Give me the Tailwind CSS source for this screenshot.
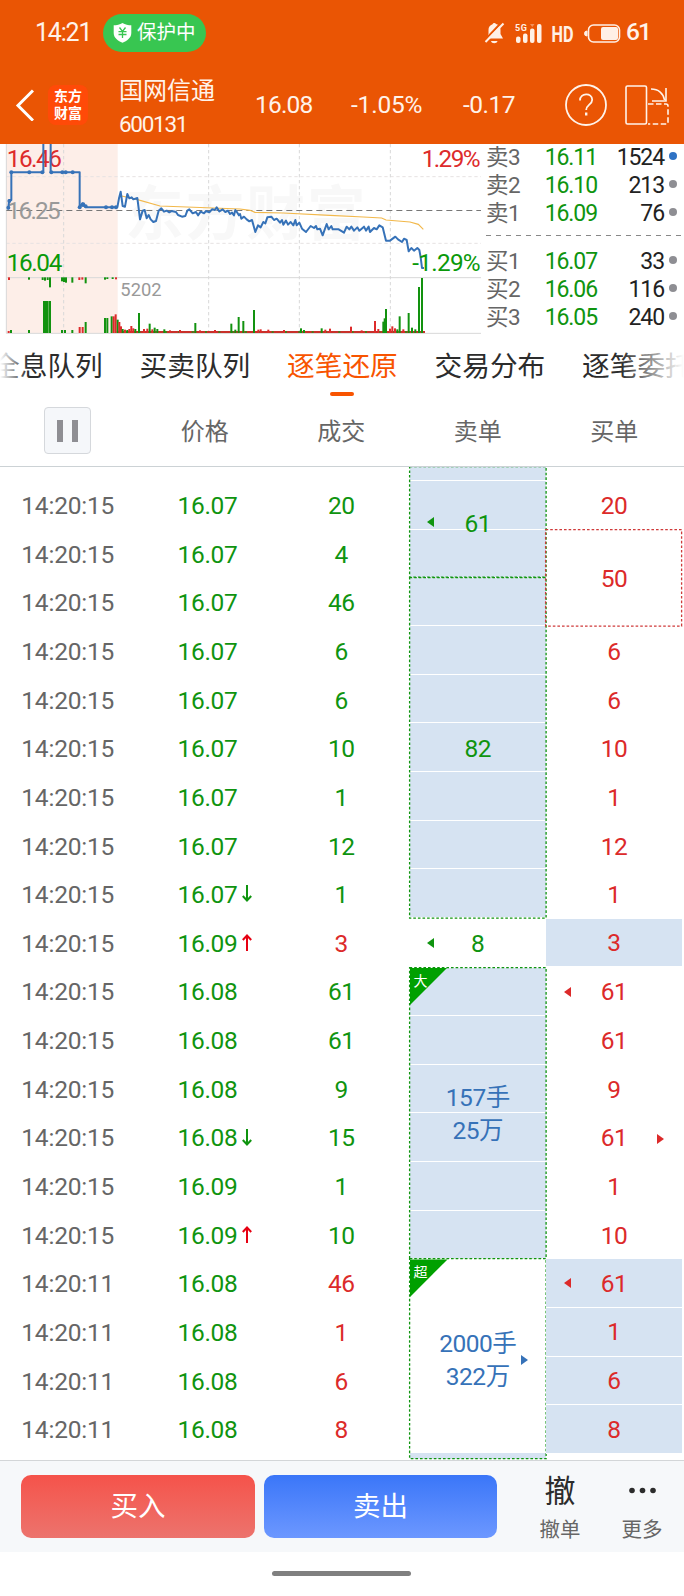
<!DOCTYPE html>
<html lang="zh-CN">
<head>
  <meta charset="UTF-8">
  <meta name="viewport" content="width=device-width, initial-scale=1.0">
  <title>国网信通 600131</title>
  <script src="https://cdn.jsdelivr.net/npm/@tailwindcss/browser@4"></script>
</head>
<body class="bg-white font-['Roboto','Noto_Sans_CJK_SC',sans-serif] text-2xl leading-none">
  <div class="w-[684px] h-[1596px] overflow-hidden flex flex-col">

    <!-- Cabecera -->
    <header class="h-36 shrink-0 bg-[#ea5504] text-[#fff3ea]">
      <div class="h-16 flex items-center pl-[35px] pr-[35px] pt-px">
        <span class="w-[68px] text-[25px] tracking-[-1.200px]">14:21</span>
        <div class="w-[103px] h-[38px] rounded-full bg-[#38c651] flex items-center pl-[10px] gap-[5px] text-white">
          <svg class="w-[19px] h-5" viewBox="0 0 19 20"><path d="M9.5 0C7 1.6 3.500 2.300.7 2.300V10c0 5 4.500 8 8.800 9.700 4.300-1.700 8.800-4.700 8.800-9.700V2.300C15.500 2.300 12 1.600 9.500 0z" fill="#fff"/><path d="M6.500 4.500l3 4 3-4M5.500 8.700h8M5.500 11.500h8M9.500 8.500v6.500" stroke="#38c651" stroke-width="1.300" fill="none"/></svg>
          <span class="text-[19.500px] leading-6 pt-px">保护中</span>
        </div>
        <svg class="w-[142px] h-7 ml-auto" viewBox="0 0 142 28">
          <g fill="#fff0e6">
            <path d="M6 19.500L7.500 15V11a6 6 0 0 1 4-5.800A2 2 0 0 1 15 5a6 6 0 0 1 4.500 6v4l2.500 4.500zM10 22h6.500c-.5 3-6 3-6.500 0z"/>
            <path d="M3.500 21.500L20.500 3.500" stroke="#ea5504" stroke-width="2.200"/>
            <path d="M4.500 23L22.500 4.500" stroke="#fff0e6" stroke-width="2"/>
            <rect x="35" y="17.500" width="4.500" height="6.500" rx="2"/>
            <rect x="42" y="14.500" width="4.500" height="9.500" rx="2"/>
            <rect x="49" y="9.500" width="4.500" height="14.500" rx="2"/>
            <rect x="56" y="5" width="4.500" height="19" rx="2"/>
            <path d="M49 5h4.500l-2.200 3z" opacity=".4"/>
            <text x="34" y="11.500" font-size="9" font-weight="700" textLength="12">5G</text>
            <text x="70.500" y="23" font-size="22.500" font-weight="700" textLength="22" lengthAdjust="spacingAndGlyphs">HD</text>
            <rect x="120" y="8" width="17" height="13" rx="2"/>
            <path d="M106 12v5a2.500 2.500 0 0 1 0-5z" stroke="#fff0e6"/>
          </g>
          <rect x="107.500" y="6" width="31" height="17" rx="5" fill="none" stroke="#fff0e6" stroke-width="1.600"/>
        </svg>
        <span class="ml-[3px] text-[24.500px] tracking-[-1.800px] w-[23px] font-medium">61</span>
      </div>
      <div class="h-20 flex items-center pt-px">
        <svg class="w-[19px] h-8 ml-[15px]" viewBox="0 0 19 32" fill="none" stroke="#fff" stroke-width="3"><path d="M18 1.500L3 16.500l15 15"/></svg>
        <div class="w-10 h-10 ml-[14px] rounded-lg bg-[#ff4a08] text-white text-[14px] leading-[17px] font-bold text-center pt-[3px]">东方<br>财富</div>
        <div class="w-[136px] ml-[31px]">
          <div class="leading-[34px] pt-[4px]">国网信通</div>
          <div class="text-[22.500px] leading-[32px] tracking-[-1.300px]">600131</div>
        </div>
        <span class="w-24 pt-px text-[24.500px] tracking-[-0.800px]">16.08</span>
        <span class="w-[112px] pt-px text-[24.500px] tracking-[-0.200px]">-1.05%</span>
        <span class="w-[102px] pt-px text-[24.500px] tracking-[-0.500px]">-0.17</span>
        <svg class="w-[42px] h-[42px]" viewBox="0 0 42 42" fill="none" stroke="#fff3ea" stroke-width="1.800"><circle cx="21" cy="21" r="20"/><path d="M15 16.500c0-8 12.200-8 12.200-.8 0 5-6 5-6 10.300"/><path d="M21.200 28.500v3" stroke-width="2.400"/></svg>
        <svg class="w-11 h-10 ml-[18px]" viewBox="0 0 44 40" fill="none" stroke="#fff3ea" stroke-width="1.600">
          <rect x="1" y="1" width="20.500" height="38" rx="1.500"/>
          <path d="M23 19h18a2 2 0 0 1 2 2v17a1 1 0 0 1-1 1H23" stroke-dasharray="5.500 2.500"/>
          <path d="M26 4c7.500 0 12.500 4.500 13.500 11M41 3v13H27"/>
        </svg>
      </div>
    </header>

    <!-- Gráfico intradía y cinco niveles -->
    <section class="h-48 shrink-0 flex">
      <svg class="w-[481px] h-48 shrink-0" viewBox="0 12 1443 576">
        <rect x="19" y="12" width="334" height="567" fill="#fdeee8"/>
        <text x="375" y="285" font-size="176" font-weight="700" fill="#f8f8f8" textLength="722">东方财富</text>
        <g stroke="#d8d8d8" stroke-width="3" fill="none">
          <path d="M19 110H1443M19 310H1443" stroke="#e6e2e2" stroke-dasharray="10 8"/>
          <path d="M191 12V579M626 12V579M898 12V579M1171 12V579" stroke-dasharray="10 8"/>
          <path d="M19 12V580H1443M19 413H1443"/>
        </g>
        <path d="M19 211.500H1443" stroke="#777" stroke-width="3" stroke-dasharray="18 12"/>
        <polyline points="365,168 410,178 480,198 720,207 750,211 765,217 850,219 990,226 1090,231 1145,234 1158,240 1230,246 1255,253 1270,268" fill="none" stroke="#f2b84b" stroke-width="3.500"/>
        <text x="20" y="81" font-size="73" fill="#dd2b2b" textLength="166">16.46</text>
        <text x="20" y="237" font-size="73" fill="#999" textLength="162">16.25</text>
        <text x="20" y="393" font-size="73" fill="#0a990a" textLength="167">16.04</text>
        <g fill="none" stroke="#3672b8" stroke-width="6" stroke-linejoin="round">
          <polyline points="24,208 28,180 34,180 34,97 130,97 130,0 152,0 152,97 239,97 239,202 248,190 258,202 352,202 357,175 362,155 368,198 375,200 382,162 388,175 395,172 400,178 412,174 416,205 420,238 428,212 434,210 440,235 446,225 452,238 460,246 468,243 476,212 484,205 492,215 500,212 508,217 515,213 528,216 534,225 546,230 556,228 562,212 568,208 578,220 588,216 594,226 602,215 612,220 618,213 628,217 636,208 645,210 650,202 658,214 668,208 676,216 684,212 690,222 696,218 702,226 706,210 712,218 718,228"/>
          <polyline transform="translate(690 0)" points="28,228 30,222 34,236 42,230 50,238 58,244 66,240 76,276 84,256 92,262 100,246 106,250 112,232 124,230 132,240 140,236 150,248 156,240 160,254 168,242 174,254 182,246 190,256 196,240 200,256 208,248 216,266 228,276 242,258 252,264 258,258 262,268 270,266 278,286 290,252 296,268 304,258 308,268 326,268 342,278 350,260 358,268 364,260 372,272 382,262 388,272 402,260 408,272 416,260 420,276 432,264 440,268 448,256 458,262 468,302 480,302 496,290 504,298 516,306 522,296 530,300 536,334 544,324 552,332 562,324 568,330 572,352 576,384 582,384"/>
        </g>
        <g fill="#3672b8">
          <circle cx="28" cy="183" r="6"/><circle cx="25" cy="203" r="6"/><circle cx="34" cy="97" r="6"/><circle cx="88" cy="97" r="6"/><circle cx="127" cy="97" r="6"/><circle cx="154" cy="97" r="6"/>
          <circle cx="187" cy="97" r="6"/><circle cx="197" cy="97" r="6"/><circle cx="218" cy="97" r="6"/><circle cx="239" cy="202" r="6"/><circle cx="249" cy="194" r="7"/>
          <circle cx="257" cy="199" r="6"/><circle cx="318" cy="202" r="6"/><circle cx="336" cy="202" r="6"/><circle cx="348" cy="202" r="6"/>
        </g>
        <text x="1265" y="81" font-size="73" fill="#dd2b2b" textLength="177">1.29%</text>
        <text x="1237" y="393" font-size="73" fill="#0a990a" textLength="205">-1.29%</text>
        <text x="361" y="468" font-size="55" fill="#999" textLength="124">5202</text>
        <!-- volumen -->
        <g id="volume"></g>
      </svg>
      <div class="flex-1 pl-[5px] pr-[7px] text-[23px]">
        <div id="asks" class="-mt-px"></div>
        <svg class="w-[196px] h-[20px] block" viewBox="0 0 196 20"><path d="M0 8.500H196" stroke="#888" stroke-dasharray="5 5"/></svg>
        <div id="bids"></div>
      </div>
    </section>

    <!-- Pestañas -->
    <nav class="relative h-[62px] shrink-0 overflow-hidden text-[27.700px] text-[#2c2c2c]">
      <div class="flex gap-[36.500px] -ml-[8px] pt-[11px] leading-[40px] whitespace-nowrap">
        <span class="w-[111px] shrink-0">全息队列</span>
        <span class="w-[111px] shrink-0">买卖队列</span>
        <span class="w-[111px] shrink-0 text-[#f85400]">逐笔还原</span>
        <span class="w-[111px] shrink-0">交易分布</span>
        <span class="w-[111px] shrink-0">逐笔委托</span>
      </div>
      <div class="mx-auto mt-[5px] w-6 h-1 rounded-full bg-[#f85400]"></div>
      <div class="absolute left-0 top-0 w-7 h-14 bg-linear-to-r from-white to-white/0"></div>
      <div class="absolute right-0 top-0 w-16 h-14 bg-linear-to-l from-white to-white/0"></div>
    </nav>

    <!-- Encabezado de la tabla -->
    <div class="h-[69px] shrink-0 grid grid-cols-[repeat(5,136.500px)] items-center text-center text-[#666] border-b border-[#ccd2d5] pb-[3px]">
      <div class="w-[47px] h-[47px] ml-[44px] rounded border border-[#d5d8dc] bg-[#f5f7fa] flex items-center justify-center gap-[9px]">
        <i class="w-[6px] h-[22px] bg-[#8e8e93]"></i>
        <i class="w-[6px] h-[22px] bg-[#8e8e93]"></i>
      </div>
      <span class="pt-[3px]">价格</span>
      <span class="pt-[3px]">成交</span>
      <span class="pt-[3px]">卖单</span>
      <span class="pt-[3px]">买单</span>
    </div>

    <!-- Lista -->
    <main class="h-[993px] shrink-0 overflow-hidden flex text-[24.500px] tracking-[-0.500px]">
      <div id="ticks" class="w-[409.500px] pt-[14px]"></div>
      <div id="sells" class="w-[136.500px]"></div>
      <div id="buys" class="w-[136px] pt-[14px]"></div>
    </main>

    <!-- Barra inferior -->
    <footer class="h-[92px] shrink-0 bg-[#f6f8fa] border-t border-[#d3d6d8] flex items-start pt-[14px] pl-[21px]">
      <button class="w-[234px] h-[63px] rounded-[10px] bg-linear-to-b from-[#f5524a] to-[#ec736d] text-white text-[27.500px] pt-px">买入</button>
      <button class="w-[233px] h-[63px] ml-[9px] rounded-[10px] bg-linear-to-b from-[#3a76f8] to-[#6c97ff] text-white text-[27.500px] pt-px">卖出</button>
      <div class="w-[82px] ml-[22px] text-center text-[#2c2c2c]">
        <div class="text-[31px] leading-[32px] pt-px">撤</div>
        <div class="text-[20.500px] leading-[24px] mt-[10px] text-[#666]">撤单</div>
      </div>
      <div class="w-[82px] text-center">
        <svg class="w-7 h-8 mx-auto" viewBox="0 0 28 32" fill="#2c2c2c"><circle cx="4" cy="15.500" r="2.800"/><circle cx="14.500" cy="15.500" r="2.800"/><circle cx="25" cy="15.500" r="2.800"/></svg>
        <div class="text-[20.500px] leading-[24px] mt-[11px] text-[#666]">更多</div>
      </div>
    </footer>
    <div class="flex-1 pt-[19px]"><div class="w-[139px] h-[5px] ml-[272px] rounded-full bg-[#808080]"></div></div>
  </div>

  <script>
    const GREEN = 'text-[#0f940f]';
    const RED = 'text-[#dc2a2a]';

    // Barras de volumen: [x, alto, color]
    const bars = [
      [26,6,'r'],[33,9,'g'],[87,9,'g'],[132,96,'g'],[138,96,'g'],[143,96,'g'],[150,96,'g'],[186,9,'g'],[195,9,'g'],[217,9,'g'],
      [239,18,'r'],[248,18,'r'],[257,33,'g'],[315,45,'g'],[322,45,'g'],[335,50,'g'],[341,50,'r'],[347,56,'r'],[353,40,'g'],[358,33,'r'],[363,20,'r'],[368,12,'g'],[375,10,'r'],
      [382,9,'g'],[388,12,'r'],[394,21,'r'],[400,14,'r'],[406,12,'g'],[417,60,'g'],[432,12,'r'],[442,13,'r'],[449,28,'g'],[457,11,'r'],[464,16,'g'],[472,12,'g'],
      [493,11,'g'],[510,8,'r'],[540,9,'r'],[586,30,'g'],[600,8,'r'],[645,9,'r'],[694,28,'g'],[706,10,'g'],[716,48,'g'],[730,36,'g'],
      [762,69,'g'],[775,10,'r'],[782,11,'r'],[805,10,'r'],[852,9,'r'],[903,14,'g'],[912,9,'g'],[965,14,'g'],[976,10,'r'],[990,13,'r'],
      [1053,19,'r'],[1085,8,'r'],[1125,36,'r'],[1135,12,'r'],[1150,34,'g'],[1154,44,'g'],[1158,72,'g'],[1170,13,'r'],[1177,20,'r'],[1185,14,'r'],
      [1192,11,'g'],[1199,50,'g'],[1210,11,'r'],[1226,60,'g'],[1236,16,'g'],[1246,11,'g'],[1257,138,'g'],[1266,165,'g']
    ];
    const upper = [[27,8,'r'],[87,7,'g'],[128,8,'g'],[135,10,'g'],[143,8,'g'],[150,30,'g'],[186,12,'g'],[192,14,'g'],[198,16,'g'],[217,16,'g'],[238,8,'r'],[247,7,'r'],[257,18,'g'],[315,7,'g'],[322,5,'g'],[338,5,'g'],[348,6,'r']];
    const fill = c => c === 'r' ? '#dd2b2b' : '#12920f';
    document.getElementById('volume').innerHTML =
      '<path d="M350 576H1275" stroke="#c8302a" stroke-width="6"/><path d="M375 576H1275" stroke="#4a7a18" stroke-width="6" stroke-dasharray="6 34"/>' +
      bars.map(([x, h, c]) => `<rect x="${x - 3}" y="${579 - h}" width="6" height="${h}" fill="${fill(c)}"/>`).join('') +
      upper.map(([x, h, c]) => `<rect x="${x - 3}" y="412" width="6" height="${h}" fill="${fill(c)}"/>`).join('');

    // Cinco niveles
    const level = ([name, price, qty, dot]) => `
      <div class="h-7 flex items-center">
        <span class="w-[37px] text-[#666] tracking-[-0.500px] text-[22.500px]">${name}</span>
        <span class="w-[74px] text-right tracking-[-1.100px] ${GREEN}">${price}</span>
        <span class="w-[67px] text-right tracking-[-1.100px] text-[#222]">${qty}</span>
        <i class="w-2 h-2 ml-[5px] -mt-[3px] rounded-full ${dot || 'bg-[#8e8e93]'}"></i>
      </div>`;
    document.getElementById('asks').innerHTML = [['卖3','16.11','1524','bg-[#2f72c4]'],['卖2','16.10','213'],['卖1','16.09','76']].map(level).join('');
    document.getElementById('bids').innerHTML = [['买1','16.07','33'],['买2','16.06','116'],['买3','16.05','240']].map(level).join('');

    // Operaciones: hora, precio, flecha, volumen, color
    const ticks = [
      ['14:20:15','16.07','','20',GREEN],['14:20:15','16.07','','4',GREEN],['14:20:15','16.07','','46',GREEN],['14:20:15','16.07','','6',GREEN],
      ['14:20:15','16.07','','6',GREEN],['14:20:15','16.07','','10',GREEN],['14:20:15','16.07','','1',GREEN],['14:20:15','16.07','','12',GREEN],
      ['14:20:15','16.07','down','1',GREEN],['14:20:15','16.09','up','3',RED],['14:20:15','16.08','','61',GREEN],['14:20:15','16.08','','61',GREEN],
      ['14:20:15','16.08','','9',GREEN],['14:20:15','16.08','down','15',GREEN],['14:20:15','16.09','','1',GREEN],['14:20:15','16.09','up','10',GREEN],
      ['14:20:11','16.08','','46',RED],['14:20:11','16.08','','1',RED],['14:20:11','16.08','','6',RED],['14:20:11','16.08','','8',RED]
    ];
    const arrows = {
      '': '',
      up: '<svg class="w-[10px] h-[18px] ml-[5px] -mt-[2px]" viewBox="0 0 10 18" fill="none" stroke="#e60012" stroke-width="2"><path d="M5 17V1.500M.8 6L5 1.500 9.200 6"/></svg>',
      down: '<svg class="w-[10px] h-[18px] ml-[5px] -mt-[2px]" viewBox="0 0 10 18" fill="none" stroke="#0f940f" stroke-width="2"><path d="M5 0v15.500M.8 11L5 15.500 9.200 11"/></svg>'
    };
    document.getElementById('ticks').innerHTML = ticks.map(([time, price, arrow, vol, color]) => `
      <div class="h-[48.650px] pt-[2px] grid grid-cols-3 items-center text-center">
        <span class="text-[#666] tracking-[-0.200px] pr-px">${time}</span>
        <span class="flex items-center pl-[41px] ${GREEN}"><b class="w-[59px] font-normal text-left tracking-[-0.300px]">${price}</b>${arrows[arrow]}</span>
        <span class="${color}">${vol}</span>
      </div>`).join('');

    const left = '<svg class="absolute left-[17.500px] top-1/2 -mt-[5px] w-[7px] h-[10px]" viewBox="0 0 7 10" fill="currentColor"><path d="M7 0v10L0 5z"/></svg>';
    const right = '<svg class="absolute right-[18px] top-1/2 -mt-[4px] w-[7px] h-[10px]" viewBox="0 0 7 10" fill="currentColor"><path d="M0 0v10l7-5z"/></svg>';
    const outline = color => `<svg class="absolute inset-0 w-full h-full overflow-visible" fill="none" stroke="${color}" stroke-width="1.300" stroke-dasharray="2.600 2"><rect x="-.4" y="-.4" width="100%" height="100%"/></svg>`;
    const cell = '<div class="h-[48.650px] bg-[#d6e3f2] border-b border-white"></div>';
    const tag = t => `<div class="absolute left-0 top-0 w-[38px] h-[38px] bg-[#00a000] [clip-path:polygon(0_0,100%_0,0_100%)] text-white text-sm leading-[26px] pl-[4px]">${t}</div>`;
    const label = (text, color) => `<div class="absolute inset-0 pt-[2px] flex items-center justify-center text-center leading-[33px] ${color}">${text}</div>`;

    // Órdenes de venta
    document.getElementById('sells').innerHTML = `
      <div class="relative h-[110.500px]">
        <div class="h-[14px] bg-[#d6e3f2] border-b border-white"></div>${cell}${cell}
        ${outline('#0f940f')}${label('61', GREEN)}<div class="${GREEN}">${left}</div>
      </div>
      <div class="relative h-[340.500px]">${cell.repeat(7)}${outline('#0f940f')}${label('82', GREEN)}</div>
      <div class="relative h-[49.500px]"><div class="h-full pt-px"><div class="h-full bg-white"></div></div>${label('8', GREEN)}<div class="${GREEN}">${left}</div></div>
      <div class="relative h-[291.900px]">${cell.repeat(6)}${tag('大')}${outline('#0f940f')}${label('157手<br>25万', 'text-[#3672b8]')}</div>
      <div class="relative h-[200px] bg-white flex flex-col justify-end">
        <div class="h-[6px] bg-[#d6e3f2]"></div>
        ${tag('超')}${outline('#0f940f')}${label('2000手<br>322万', 'text-[#3672b8]')}<div class="text-[#3672b8]">${right}</div>
      </div>`;

    // Órdenes de compra: texto, filas, fondo, extra
    const buys = [['20'],['50',2,'',outline('#cf3a3a')],['6'],['6'],['10'],['1'],['12'],['1'],['3',1,'fill'],['61',1,'',left],['61'],['9'],['61',1,'',right],['1'],['10'],['61',1,'fill',left],['1',1,'fill'],['6',1,'fill'],['8',1,'fill']];
    document.getElementById('buys').innerHTML = buys.map(([text, rows, bg, extra]) => `
      <div class="relative flex items-center justify-center pt-[2px] ${rows === 2 ? 'h-[96.600px] mb-[0.700px]' : 'h-[48.650px]'} ${bg ? 'bg-[#d6e3f2] border-b border-white' : ''} ${RED}">${text}${extra || ''}</div>`).join('');
  </script>
</body>
</html>
